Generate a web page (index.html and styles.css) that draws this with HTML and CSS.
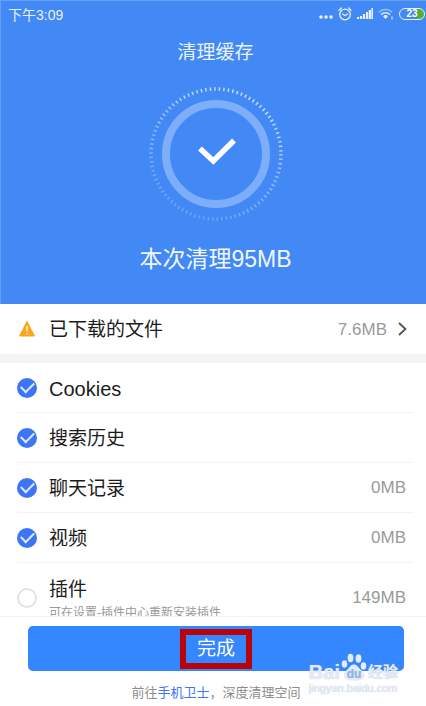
FILE: index.html
```html
<!DOCTYPE html>
<html lang="zh-CN">
<head>
    <meta charset="UTF-8">
    <meta name="viewport" content="width=device-width, initial-scale=1.0">
    <title>清理缓存</title>
    <link rel="stylesheet" href="styles.css">
</head>
<body>

<header class="hero">
    <div class="status">
        <span class="time">下午3:09</span>
        <svg width="14" height="14" viewBox="0 0 14 14" fill="#e6f2ff">
            <circle cx="2" cy="10" r="1.8"/>
            <circle cx="7" cy="10" r="1.8"/>
            <circle cx="12" cy="10" r="1.8"/>
        </svg>
        <svg width="14" height="14" viewBox="0 0 14 14" fill="none" stroke="#e6f2ff" stroke-width="1.3" stroke-linecap="round">
            <circle cx="7" cy="7.5" r="5.3"/>
            <path d="M1 3.2 3.4 1M13 3.2 10.6 1M4.6 7l2.4 1.6L9.6 7"/>
        </svg>
        <svg width="16" height="14" viewBox="0 0 16 14" fill="#e6f2ff">
            <path d="M0 10h2.200v2H0zM3 9h2.200v3H3zM6 7h2.200v5H6zM9 5h2.200v7H9zM11.800 3H14v9h-2.200zM14.400 1H16v11h-1.600z"/>
        </svg>
        <svg width="16" height="14" viewBox="0 0 16 14" fill="none" stroke="#d3e6ff" stroke-width="1.5">
            <path d="M1 5.200a9.300 9.300 0 0 1 13 0" opacity=".6"/>
            <path d="M3 7.600a6.400 6.400 0 0 1 9 0"/>
            <path d="M5 9.300a3.600 3.600 0 0 1 5 0L7.500 12z" fill="#e6f2ff" stroke="none"/>
            <path d="M14 9.500v3" stroke-width="1.200"/>
        </svg>
        <span class="battery">23</span>
    </div>
    <h1 class="title">清理缓存</h1>
    <svg class="ring" width="134" height="134" viewBox="0 0 134 134" fill="none">
        <defs>
            <linearGradient id="fade" x1="0.75" y1="0.1" x2="0.3" y2="1">
                <stop offset="0" stop-color="#fff" stop-opacity=".7"/>
                <stop offset=".5" stop-color="#fff" stop-opacity=".4"/>
                <stop offset="1" stop-color="#fff" stop-opacity=".2"/>
            </linearGradient>
        </defs>
        <circle cx="67" cy="67" r="65" stroke="url(#fade)" stroke-width="3.500" stroke-dasharray="1.500 3.037"/>
        <circle cx="67" cy="67" r="50" stroke="#7eaefa" stroke-width="8"/>
        <path d="M51 61.500 64.300 74 85 53.500" stroke="#fff" stroke-width="5.500"/>
    </svg>
    <p class="result">本次清理95MB</p>
</header>

<main class="list">
    <a class="row files" href="#">
        <svg width="20" height="20" viewBox="0 0 20 20">
            <path d="M10 2.500 17.500 17h-15z" fill="#fda41c" stroke="#fda41c" stroke-linejoin="round"/>
            <path d="M10 7v5.500M10 14v1.500" stroke="#fff" stroke-width="1.300"/>
        </svg>
        <span class="name">已下载的文件</span>
        <span class="size">7.6MB</span>
        <svg class="arrow" width="9" height="14" viewBox="0 0 9 14" fill="none" stroke="#555" stroke-width="1.800">
            <path d="M1 1l6.500 6L1 13"/>
        </svg>
    </a>
    <div class="items">
        <label class="row">
            <input type="checkbox" class="check" checked>
            <span class="name latin">Cookies</span>
        </label>
        <label class="row">
            <input type="checkbox" class="check" checked>
            <span class="name">搜索历史</span>
        </label>
        <label class="row">
            <input type="checkbox" class="check" checked>
            <span class="name">聊天记录</span>
            <span class="size">0MB</span>
        </label>
        <label class="row">
            <input type="checkbox" class="check" checked>
            <span class="name">视频</span>
            <span class="size">0MB</span>
        </label>
        <label class="row plugin">
            <input type="checkbox" class="check">
            <span class="name">插件<small class="hint">可在设置-插件中心重新安装插件</small></span>
            <span class="size">149MB</span>
        </label>
    </div>
</main>

<footer class="footer">
    <button type="button" class="done"><span class="mark">完成</span></button>
    <p class="tip">前往<a href="#">手机卫士</a>，深度清理空间</p>
    <div class="watermark">
        <div class="brand">
            <span>Bai</span>
            <svg width="26" height="28" viewBox="0 0 26 28" fill="currentColor">
                <ellipse cx="3.500" cy="11" rx="2.800" ry="3.800"/>
                <ellipse cx="9.500" cy="5" rx="2.900" ry="4.200"/>
                <ellipse cx="17.500" cy="5.500" rx="2.900" ry="4.200"/>
                <ellipse cx="22.500" cy="13" rx="2.800" ry="3.800"/>
                <path d="M13 11.500c-3 0-4.200 2.400-6 4.500-2 2-4.500 3.500-4 7 .5 3.500 3.500 4.500 10 4.500s10-1 10.500-4.500c.4-3-2.500-5-4.500-7s-3-4.500-6-4.500z"/>
                <text class="du" x="13" y="25" text-anchor="middle">du</text>
            </svg>
            <span class="jy">经验</span>
        </div>
        <div class="site">jingyan.baidu.com</div>
    </div>
</footer>

</body>
</html>
```
FILE: styles.css
```css
* {
    box-sizing: border-box;
}
body {
    margin: 0;
    height: 100vh;
    display: flex;
    flex-direction: column;
    font-family: "Liberation Sans", "Noto Sans CJK SC", sans-serif;
    background: #fff;
    color: #1c1c1c;
}
a {
    color: inherit;
    text-decoration: none;
}

/* blue top part */
.hero {
    flex: none;
    display: flex;
    flex-direction: column;
    align-items: center;
    padding: 0 0 29px 4px;
    background: #4289f5;
    border-top: 1px solid #64a0f8;
    border-left: 1px solid #64a0f8;
    color: #fff;
}
.status {
    align-self: stretch;
    display: flex;
    align-items: center;
    gap: 5px;
    height: 26px;
    padding: 0 1px 0 3px;
    font-size: 14px;
    color: #e6f2ff;
}
.time {
    flex: 1;
}
.battery {
    width: 26px;
    height: 12px;
    border: 1px solid #e6f2ff;
    border-radius: 6px;
    background: linear-gradient(to right, #4289f5 70%, #4fb32b 70%);
    font-size: 10px;
    font-weight: bold;
    line-height: 10px;
    text-align: center;
    color: #fff;
}
.title {
    margin: 12px 0 20px;
    font-size: 19px;
    font-weight: normal;
    line-height: 28px;
    color: #e9f4ff;
}
.ring {
    display: block;
}
.result {
    margin: 22px 0 0;
    font-size: 23px;
    line-height: 32px;
    color: #f0f7ff;
}

/* cache list */
.list {
    flex: 1;
    min-height: 0;
    overflow: hidden;
}
.row {
    display: flex;
    align-items: center;
    height: 50px;
    padding-right: 7px;
    border-bottom: 1px solid #f3f3f3;
}
.files {
    height: 59px;
    padding: 0 19px 0 17px;
    border-bottom: 9px solid #f3f3f3;
}
.items {
    padding: 0 13px 0 17px;
}
.name {
    flex: 1;
    padding-top: 2px;
    margin-left: 12px;
    font-size: 19px;
    line-height: 28px;
}
.latin {
    font-size: 20px;
}
.size {
    font-size: 17px;
    color: #9a9a9a;
}
.files .size {
    padding-top: 2px;
}
.arrow {
    margin-left: 11px;
}
.check {
    appearance: none;
    display: grid;
    place-items: center;
    width: 20px;
    height: 20px;
    margin: 0;
    border: 2px solid #e2e2e2;
    border-radius: 50%;
}
.check:checked {
    border: none;
    background: #3c75f6;
}
.check:checked::after {
    content: "";
    width: 11px;
    height: 6px;
    margin-bottom: 3px;
    border-left: 2px solid #dfe9ff;
    border-bottom: 2px solid #dfe9ff;
    transform: rotate(-45deg);
}
.plugin {
    height: 71px;
}
.hint {
    display: block;
    font-size: 12px;
    line-height: 18px;
    color: #999;
}

/* bottom bar */
.footer {
    position: relative;
    flex: none;
    padding: 9px 22px 3px 28px;
    border-top: 1px solid #f3f3f3;
}
.done {
    display: flex;
    align-items: center;
    justify-content: center;
    width: 100%;
    height: 45px;
    padding: 0;
    border: none;
    border-radius: 5px;
    background: #3487fe;
    font-family: inherit;
    font-size: 19px;
    color: #fff;
    cursor: pointer;
}
.mark {
    padding: 0 11px;
    border: 6px solid #b80409;
    line-height: 28px;
}
.tip {
    margin: 12px 0 0;
    font-size: 13px;
    line-height: 20px;
    text-align: center;
    color: #8c8c8c;
}
.tip a {
    color: #3c75f6;
}
.watermark {
    position: absolute;
    right: 28px;
    bottom: 11px;
    color: #e3ebf6;
    text-shadow: 0 0 1px #b9c3d0;
    pointer-events: none;
}
.brand {
    display: flex;
    align-items: flex-end;
    gap: 1px;
    font-size: 20px;
    font-weight: bold;
    line-height: 18px;
}
.jy {
    font-size: 15px;
}
.du {
    font-size: 12px;
    font-weight: bold;
    fill: #8fb4ea;
}
.site {
    font-size: 11px;
    line-height: 14px;
}
```
